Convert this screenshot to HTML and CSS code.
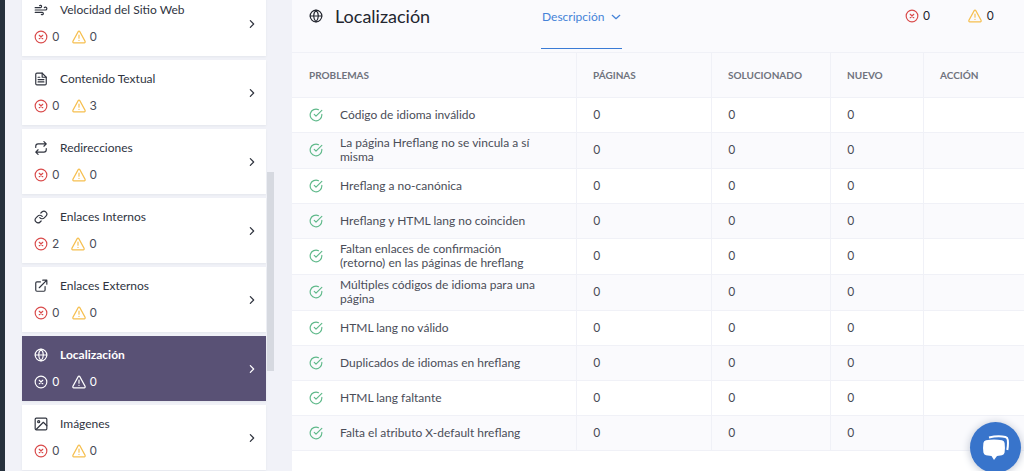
FILE: index.html
```html
<!DOCTYPE html>
<html lang="es">
<head>
<meta charset="utf-8">
<meta name="viewport" content="width=device-width, initial-scale=1">
<title>Localización</title>
<link rel="stylesheet" href="styles.css">
</head>
<body>
<svg class="sprite" aria-hidden="true">
  <symbol id="i-wind" viewBox="0 0 24 24"><path d="M9.59 4.59A2 2 0 1 1 11 8H2m10.59 11.41A2 2 0 1 0 14 16H2m15.73-8.27A2.5 2.5 0 1 1 19.5 12H2"/></symbol>
  <symbol id="i-file" viewBox="0 0 24 24"><path d="M14 2H5a2 2 0 0 0-2 2v16a2 2 0 0 0 2 2h14a2 2 0 0 0 2-2V9z"/><path d="M14 2v7h7M17 13H7M17 17H7M10 9H7"/></symbol>
  <symbol id="i-repeat" viewBox="0 0 24 24"><path d="M17 1l4 4-4 4M3 11V9a4 4 0 0 1 4-4h14M7 23l-4-4 4-4M21 13v2a4 4 0 0 1-4 4H3"/></symbol>
  <symbol id="i-link" viewBox="0 0 24 24"><path d="M10 13a5 5 0 0 0 7.54.54l3-3a5 5 0 0 0-7.07-7.07l-1.72 1.71"/><path d="M14 11a5 5 0 0 0-7.54-.54l-3 3a5 5 0 0 0 7.07 7.07l1.71-1.71"/></symbol>
  <symbol id="i-external" viewBox="0 0 24 24"><path d="M19 13v6a2 2 0 0 1-2 2H5a2 2 0 0 1-2-2V7a2 2 0 0 1 2-2h6M15 2h7v7M9 15L22 2"/></symbol>
  <symbol id="i-globe" viewBox="0 0 24 24"><circle cx="12" cy="12" r="10"/><path d="M2 12h20M12 2a15.3 15.3 0 0 1 4 10 15.3 15.3 0 0 1-4 10 15.3 15.3 0 0 1-4-10 15.3 15.3 0 0 1 4-10z"/></symbol>
  <symbol id="i-image" viewBox="0 0 24 24"><rect x="2" y="2" width="20" height="20" rx="2"/><circle cx="8" cy="8" r="1.8"/><path d="M22 15l-6-6L4 21"/></symbol>
  <symbol id="i-error" viewBox="0 0 24 24"><circle cx="12" cy="12" r="10"/><path d="M15 9l-6 6M9 9l6 6"/></symbol>
  <symbol id="i-warn" viewBox="0 0 24 24"><path d="M10.6 2.8L1.5 19.5A1.8 1.8 0 0 0 3 22h18a1.8 1.8 0 0 0 1.5-2.500L13.400 2.800a1.600 1.600 0 0 0-2.800 0z"/><path d="M12 8.500v5.500M12 17.500v.5"/></symbol>
  <symbol id="i-check" viewBox="0 0 24 24"><path d="M22 11v1A10 10 0 1 1 16.300 2.900"/><path d="M22 4L12 14l-3-3"/></symbol>
  <symbol id="i-right" viewBox="0 0 24 24"><path d="M8 4l8 8-8 8"/></symbol>
  <symbol id="i-down" viewBox="0 0 24 24"><path d="M3 8l9 8 9-8"/></symbol>
</svg>

<div class="app">
  <div class="rail"></div>
  <nav class="sidebar" aria-label="Categorías">
    <div class="cards">
      <a class="card" href="#velocidad"><svg class="icon"><use href="#i-wind"/></svg><span class="name">Velocidad del Sitio Web</span><span class="counts"><span class="count"><svg class="icon error"><use href="#i-error"/></svg>0</span><span class="count"><svg class="icon warn"><use href="#i-warn"/></svg>0</span></span><svg class="icon chevron"><use href="#i-right"/></svg></a>
      <a class="card" href="#contenido"><svg class="icon"><use href="#i-file"/></svg><span class="name">Contenido Textual</span><span class="counts"><span class="count"><svg class="icon error"><use href="#i-error"/></svg>0</span><span class="count"><svg class="icon warn"><use href="#i-warn"/></svg>3</span></span><svg class="icon chevron"><use href="#i-right"/></svg></a>
      <a class="card" href="#redirecciones"><svg class="icon"><use href="#i-repeat"/></svg><span class="name">Redirecciones</span><span class="counts"><span class="count"><svg class="icon error"><use href="#i-error"/></svg>0</span><span class="count"><svg class="icon warn"><use href="#i-warn"/></svg>0</span></span><svg class="icon chevron"><use href="#i-right"/></svg></a>
      <a class="card" href="#internos"><svg class="icon"><use href="#i-link"/></svg><span class="name">Enlaces Internos</span><span class="counts"><span class="count"><svg class="icon error"><use href="#i-error"/></svg>2</span><span class="count"><svg class="icon warn"><use href="#i-warn"/></svg>0</span></span><svg class="icon chevron"><use href="#i-right"/></svg></a>
      <a class="card" href="#externos"><svg class="icon"><use href="#i-external"/></svg><span class="name">Enlaces Externos</span><span class="counts"><span class="count"><svg class="icon error"><use href="#i-error"/></svg>0</span><span class="count"><svg class="icon warn"><use href="#i-warn"/></svg>0</span></span><svg class="icon chevron"><use href="#i-right"/></svg></a>
      <a class="card active" href="#localizacion" aria-current="page"><svg class="icon"><use href="#i-globe"/></svg><span class="name">Localización</span><span class="counts"><span class="count"><svg class="icon error"><use href="#i-error"/></svg>0</span><span class="count"><svg class="icon warn"><use href="#i-warn"/></svg>0</span></span><svg class="icon chevron"><use href="#i-right"/></svg></a>
      <a class="card" href="#imagenes"><svg class="icon"><use href="#i-image"/></svg><span class="name">Imágenes</span><span class="counts"><span class="count"><svg class="icon error"><use href="#i-error"/></svg>0</span><span class="count"><svg class="icon warn"><use href="#i-warn"/></svg>0</span></span><svg class="icon chevron"><use href="#i-right"/></svg></a>
    </div>
    <div class="track"><div class="thumb"></div></div>
  </nav>

  <main class="panel" id="localizacion">
    <header class="panel-head">
      <svg class="icon"><use href="#i-globe"/></svg>
      <h1 class="title">Localización</h1>
      <button class="tab" type="button">Descripción<svg class="icon small"><use href="#i-down"/></svg></button>
      <div class="totals">
        <span class="count"><svg class="icon error"><use href="#i-error"/></svg>0</span>
        <span class="count"><svg class="icon warn"><use href="#i-warn"/></svg>0</span>
      </div>
    </header>
    <table class="issues">
      <colgroup><col class="c-issue"><col class="c-pages"><col class="c-fixed"><col class="c-new"><col></colgroup>
      <thead><tr><th scope="col">PROBLEMAS</th><th scope="col">PÁGINAS</th><th scope="col">SOLUCIONADO</th><th scope="col">NUEVO</th><th scope="col">ACCIÓN</th></tr></thead>
      <tbody>
        <tr><td><div class="issue"><svg class="icon ok"><use href="#i-check"/></svg><span>Código de idioma inválido</span></div></td><td>0</td><td>0</td><td>0</td><td></td></tr>
        <tr><td><div class="issue"><svg class="icon ok"><use href="#i-check"/></svg><span>La página Hreflang no se vincula a sí misma</span></div></td><td>0</td><td>0</td><td>0</td><td></td></tr>
        <tr><td><div class="issue"><svg class="icon ok"><use href="#i-check"/></svg><span>Hreflang a no-canónica</span></div></td><td>0</td><td>0</td><td>0</td><td></td></tr>
        <tr><td><div class="issue"><svg class="icon ok"><use href="#i-check"/></svg><span>Hreflang y HTML lang no coinciden</span></div></td><td>0</td><td>0</td><td>0</td><td></td></tr>
        <tr><td><div class="issue"><svg class="icon ok"><use href="#i-check"/></svg><span>Faltan enlaces de confirmación (retorno) en las páginas de hreflang</span></div></td><td>0</td><td>0</td><td>0</td><td></td></tr>
        <tr><td><div class="issue"><svg class="icon ok"><use href="#i-check"/></svg><span>Múltiples códigos de idioma para una página</span></div></td><td>0</td><td>0</td><td>0</td><td></td></tr>
        <tr><td><div class="issue"><svg class="icon ok"><use href="#i-check"/></svg><span>HTML lang no válido</span></div></td><td>0</td><td>0</td><td>0</td><td></td></tr>
        <tr><td><div class="issue"><svg class="icon ok"><use href="#i-check"/></svg><span>Duplicados de idiomas en hreflang</span></div></td><td>0</td><td>0</td><td>0</td><td></td></tr>
        <tr><td><div class="issue"><svg class="icon ok"><use href="#i-check"/></svg><span>HTML lang faltante</span></div></td><td>0</td><td>0</td><td>0</td><td></td></tr>
        <tr><td><div class="issue"><svg class="icon ok"><use href="#i-check"/></svg><span>Falta el atributo X-default hreflang</span></div></td><td>0</td><td>0</td><td>0</td><td></td></tr>
      </tbody>
    </table>
  </main>
</div>

<button class="chat" type="button" aria-label="Chat">
  <svg class="chat-icon" viewBox="0 0 28 26"><path class="back" d="M7 2.500Q16 .5 23.500 2Q25.500 2.500 25.800 5Q26.300 10 25.300 15"/><path class="front" d="M4 5.200Q12 3.600 20 5.200Q22.300 5.600 22.600 8Q23.300 13 22.600 17.500Q22.300 19.800 20 20.200L15 20.900L12 25L9.500 20.900L4 20.200Q1.700 19.800 1.400 17.500Q.7 13 1.400 8Q1.700 5.600 4 5.200Z"/></svg>
</button>
</body>
</html>
```
FILE: styles.css
```css
* { box-sizing: border-box; }

body {
  margin: 0;
  overflow: hidden;
  background: #f1f2f8;
  color: #4a4d58;
  font-family: Lato, "Noto Sans", sans-serif;
  font-size: 12px;
  line-height: 14px;
}

.sprite { display: none; }

.icon {
  width: 14px;
  height: 14px;
  flex: none;
  fill: none;
  stroke: currentColor;
  stroke-width: 2;
  stroke-linecap: round;
  stroke-linejoin: round;
}

.small, .chevron { width: 10px; height: 10px; stroke-width: 3; }
.error { color: #d94a4a; }
.warn { color: #f6bf4f; }
.ok { color: #5fb98a; }

.app { display: flex; min-height: 100vh; }
.rail { width: 5px; background: #27313d; }
.sidebar { display: flex; width: 287px; padding-left: 17px; }

.cards {
  display: flex;
  flex-direction: column;
  flex: 1;
  gap: 4px;
  margin-top: -9px;
}

.card {
  display: grid;
  grid-template-columns: 14px 1fr 10px;
  align-items: center;
  column-gap: 12px;
  row-gap: 12px;
  padding: 12px 9px 12px 12px;
  min-height: 65px;
  background: #fff;
  box-shadow: 0 1px 2px #e4e6ec;
  color: #30343f;
  text-decoration: none;
}

.counts {
  display: flex;
  grid-column: 1 / 3;
  grid-row: 2;
  gap: 12px;
  color: #4a4d58;
}

.chevron { grid-column: 3; grid-row: 1 / 3; }

.count {
  display: flex;
  align-items: center;
  gap: 4px;
  font-family: Inter, "Noto Sans", sans-serif;
}

.active { background: #595175; color: #fff; }
.active .name { font-weight: 700; }
.active .counts, .active .icon { color: #fff; }

.track { width: 26px; padding: 172px 0 0 1px; }
.thumb { width: 7px; height: 199px; background: #d6d9e0; }

.panel { flex: 1; min-width: 0; background: #fff; }

.panel-head {
  display: flex;
  align-items: center;
  height: 52px;
  padding: 0 30px 20px 17px;
  background: #fafafd;
  color: #23262f;
}

.title {
  margin: 0;
  width: 218px;
  padding-left: 12px;
  font-size: 18px;
  font-weight: 400;
  line-height: 24px;
}

.tab {
  display: flex;
  align-items: center;
  align-self: flex-start;
  gap: 7px;
  height: 49px;
  padding: 0 1px 14px;
  border: 0;
  border-bottom: 1px solid #3a7bd5;
  background: none;
  color: #4583d8;
  font: inherit;
}

.totals { display: flex; gap: 38px; margin-left: auto; }

.issues {
  width: 100%;
  table-layout: fixed;
  border-spacing: 0;
}

.c-issue { width: 285px; }
.c-pages { width: 135px; }
.c-fixed { width: 119px; }
.c-new { width: 93px; }

.issues th {
  height: 46px;
  padding: 0 16px;
  border: solid #f0f1f7;
  border-width: 1px 1px 1px 0;
  background: #fafafd;
  color: #70737d;
  font-size: 10px;
  font-weight: 700;
  text-align: left;
}

.issues td {
  height: 35px;
  padding: 3px 16px 4px;
  border: solid #f0f1f7;
  border-width: 0 1px 1px 0;
}

.issues td + td { font-family: Inter, "Noto Sans", sans-serif; }
.issues tr > :first-child { padding-left: 17px; }
.issues tr > :last-child { border-right: 0; }
.issues tbody tr:nth-child(even) { background: #fafafd; }

.issue { display: flex; align-items: center; gap: 17px; }
.issue span { max-width: 204px; }

.chat {
  position: fixed;
  right: 3px;
  bottom: -2px;
  display: grid;
  place-items: center;
  width: 51px;
  height: 51px;
  padding: 0;
  border: 0;
  border-radius: 50%;
  background: #3874cb;
  box-shadow: 0 1px 8px #b9c0cf;
}

.chat-icon { width: 28px; height: 26px; }
.back { fill: none; stroke: #fff; stroke-width: 2; }
.front { fill: #fff; }
```
